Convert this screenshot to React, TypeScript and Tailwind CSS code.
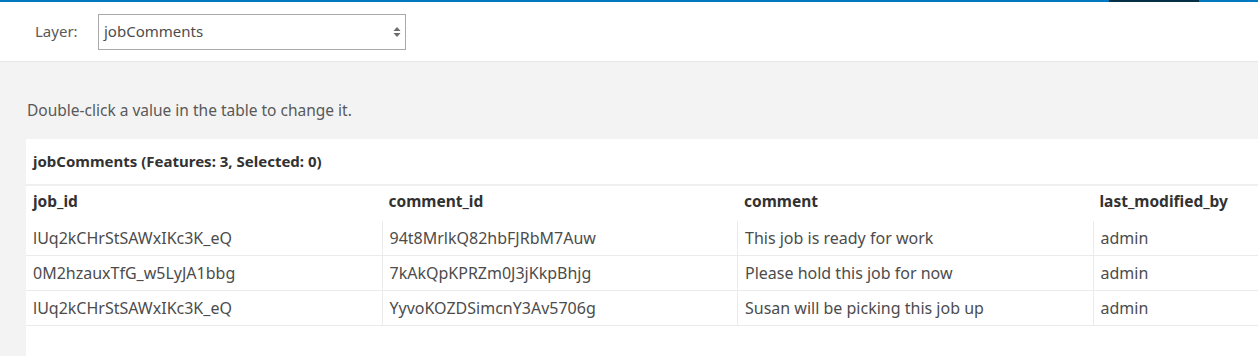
import React from "react";

const COLUMNS = ["job_id", "comment_id", "comment", "last_modified_by"];

const ROWS: string[][] = [
  ["lUq2kCHrStSAWxIKc3K_eQ", "94t8MrlkQ82hbFJRbM7Auw", "This job is ready for work", "admin"],
  ["0M2hzauxTfG_w5LyJA1bbg", "7kAkQpKPRZm0J3jKkpBhjg", "Please hold this job for now", "admin"],
  ["lUq2kCHrStSAWxIKc3K_eQ", "YyvoKOZDSimcnY3Av5706g", "Susan will be picking this job up", "admin"],
];

function SelectArrows() {
  return (
    <svg width="8" height="12" viewBox="0 0 8 12" className="shrink-0">
      <path d="M4 1 L7.5 5 H0.5 Z" fill="#6b6b6b" />
      <path d="M4 11 L7.5 7 H0.5 Z" fill="#6b6b6b" />
    </svg>
  );
}

export default function App() {
  return (
    <div className="h-[356px] w-[1258px] overflow-hidden bg-[#f3f3f3] font-['Noto_Sans','Open_Sans',sans-serif] text-[15px] text-[#4c4c4c]">
      {/* accent bar */}
      <div className="flex h-[2px]">
        <div className="flex-1 bg-[#0079c1]" />
        <div className="w-[90px] bg-[#052f47]" />
        <div className="w-[59px] bg-[#0079c1]" />
      </div>

      <div className="flex h-[60px] items-center border-b border-[#e6e6e6] bg-white pl-[35px]">
        <span className="w-[63px] text-[#595959]">Layer:</span>
        <div className="flex h-[36px] w-[308px] items-center justify-between border border-[#a9a9a9] bg-white pl-[5px] pr-[4px]">
          <span className="text-[#4c4c4c]">jobComments</span>
          <SelectArrows />
        </div>
      </div>

      <p className="pl-[27px] pt-[38px] text-[15.5px] leading-5 text-[#595959]">
        Double-click a value in the table to change it.
      </p>

      <div className="ml-[26px] mt-[19px] w-[1422px] bg-white pb-10">
        <div className="flex h-[45px] items-center px-[7px] font-bold text-[#323232]">
          jobComments (Features: 3, Selected: 0)
        </div>
        <div className="h-[2px] bg-[#efefef]" />
        <div className="grid grid-cols-4">
          {COLUMNS.map((c) => (
            <div key={c} className="flex h-[35px] items-center px-[7px] pb-[3px] text-[15.5px] font-bold text-[#323232]">
              {c}
            </div>
          ))}
        </div>
        {ROWS.map((row, i) => (
          <div key={i} className="grid grid-cols-4 border-b border-[#ebebeb] text-[16px]">
            {row.map((cell, j) => (
              <div
                key={j}
                className={`flex h-[34px] items-center px-[7px] ${j > 0 ? "border-l border-[#ebebeb]" : ""}`}
              >
                {cell}
              </div>
            ))}
          </div>
        ))}
      </div>
    </div>
  );
}
